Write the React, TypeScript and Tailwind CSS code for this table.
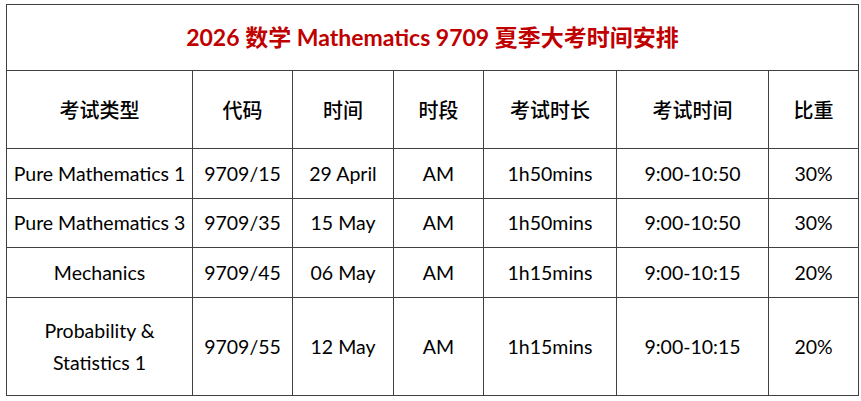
const rows = [
  { name: ["Pure Mathematics 1"], code: "9709/15", date: "29 April", slot: "AM", length: "1h50mins", time: "9:00-10:50", weight: "30%", h: "h-[50px]" },
  { name: ["Pure Mathematics 3"], code: "9709/35", date: "15 May", slot: "AM", length: "1h50mins", time: "9:00-10:50", weight: "30%", h: "h-[49px]" },
  { name: ["Mechanics"], code: "9709/45", date: "06 May", slot: "AM", length: "1h15mins", time: "9:00-10:15", weight: "20%", h: "h-[50px]" },
  { name: ["Probability &", "Statistics 1"], code: "9709/55", date: "12 May", slot: "AM", length: "1h15mins", time: "9:00-10:15", weight: "20%", h: "h-[98px]" },
];

const headers = ["考试类型", "代码", "时间", "时段", "考试时长", "考试时间", "比重"];
const widths = ["w-[186px]", "w-[100px]", "w-[101px]", "w-[90px]", "w-[133px]", "w-[152px]", "w-[90px]"];

const cell = "border border-[#404040] text-center align-middle p-0";

export default function App() {
  return (
    <div className="min-h-[401px] w-[861px] bg-white pl-[6px] pt-[4px]">
      <table
        className="border-collapse text-black"
        style={{ tableLayout: "fixed", width: 853 }}
      >
        <colgroup>
          {widths.map((w, i) => (
            <col key={i} className={w} />
          ))}
        </colgroup>
        <tbody>
          <tr className="h-[66px]">
            <td
              colSpan={7}
              className={`${cell} text-[23px] font-bold text-[#c00000] font-['Lato','Noto_Sans_CJK_SC',sans-serif]`}
            >
              2026 数学 Mathematics 9709 夏季大考时间安排
            </td>
          </tr>
          <tr className="h-[78px]">
            {headers.map((h) => (
              <td
                key={h}
                className={`${cell} text-[20px] font-medium font-['Noto_Sans_CJK_SC',sans-serif]`}
              >
                {h}
              </td>
            ))}
          </tr>
          {rows.map((r) => (
            <tr key={r.code} className={`${r.h} text-[19.5px] font-['Lato','Noto_Sans_CJK_SC',sans-serif]`}>
              <td className={`${cell} leading-[32px]`}>
                {r.name.map((n) => (
                  <div key={n}>{n}</div>
                ))}
              </td>
              <td className={cell}>{r.code}</td>
              <td className={cell}>{r.date}</td>
              <td className={cell}>{r.slot}</td>
              <td className={cell}>{r.length}</td>
              <td className={cell}>{r.time}</td>
              <td className={cell}>{r.weight}</td>
            </tr>
          ))}
        </tbody>
      </table>
    </div>
  );
}
